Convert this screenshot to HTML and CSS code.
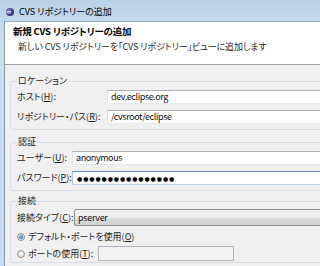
FILE: index.html
```html
<!DOCTYPE html>
<html lang="ja">
<head>
    <meta charset="UTF-8">
    <title>CVS リポジトリーの追加</title>
    <link rel="stylesheet" href="styles.css">
</head>
<body>
    <div class="window">
        <div class="titlebar">
            <svg class="app-icon" width="8" height="8" viewBox="0 0 8 8">
                <defs>
                    <radialGradient id="sphere" cx="0.35" cy="0.35" r="0.7">
                        <stop offset="0" stop-color="#8a7fd0"/>
                        <stop offset="1" stop-color="#2c2270"/>
                    </radialGradient>
                </defs>
                <circle cx="4" cy="4" r="4" fill="url(#sphere)"/>
                <rect x="0.5" y="3" width="4.5" height="0.7" fill="#fff"/>
                <rect x="0.5" y="4.6" width="4.5" height="0.7" fill="#fff"/>
            </svg>
            <span>CVS リポジトリーの追加</span>
        </div>
        <div class="client">
            <div class="banner">
                <div class="banner-title">新規 CVS リポジトリーの追加</div>
                <div class="banner-desc">新しい CVS リポジトリーを「CVS リポジトリー」ビューに追加します</div>
            </div>
            <div class="body">
                <fieldset class="group">
                    <legend>ロケーション</legend>
                    <div class="form form-location">
                        <label>ホスト(<u>H</u>):</label>
                        <div class="field">dev.eclipse.org</div>
                        <label>リポジトリー・パス(<u>R</u>):</label>
                        <div class="field">/cvsroot/eclipse</div>
                    </div>
                </fieldset>
                <fieldset class="group group-auth">
                    <legend>認証</legend>
                    <div class="form form-auth">
                        <label>ユーザー(<u>U</u>):</label>
                        <div class="field">anonymous</div>
                        <label>パスワード(<u>P</u>):</label>
                        <div class="field field-focus"><span class="dots">●●●●●●●●●●●●●●●●</span></div>
                    </div>
                </fieldset>
                <fieldset class="group group-conn">
                    <legend>接続</legend>
                    <div class="form form-conn">
                        <label>接続タイプ(<u>C</u>):</label>
                        <div class="combo">pserver</div>
                    </div>
                    <div class="radio-row">
                        <span class="radio checked"></span>
                        <span>デフォルト・ポートを使用(<u>O</u>)</span>
                    </div>
                    <div class="radio-row radio-port">
                        <span class="radio"></span>
                        <span class="port-label">ポートの使用(<u>T</u>):</span>
                        <div class="field field-disabled"></div>
                    </div>
                </fieldset>
            </div>
        </div>
    </div>
</body>
</html>
```

FILE: styles.css
```css
body {
    margin: 0;
    padding: 0;
    overflow: hidden;
    background-color: #f0f0f0;
    font-family: "Noto Sans CJK JP", sans-serif;
    font-size: 9px;
    font-feature-settings: "palt";
    color: #1a1a1a;
}
.window {
    width: 440px;
    height: 266px;
    display: flex;
    flex-direction: column;
    padding-left: 4px;
    background: linear-gradient(#b9d0e9, #cddef0 40px, #c6d9ee);
}
.titlebar {
    height: 21px;
    flex-shrink: 0;
    box-sizing: border-box;
    display: flex;
    align-items: center;
    gap: 5px;
    padding: 3px 0 0 2px;
    color: #000;
    line-height: 12px;
}
.app-icon {
    display: block;
}
.client {
    flex: 1;
    min-height: 0;
    overflow: hidden;
    background-color: #f0f0f0;
    border-left: 1px solid #8397ae;
    border-top: 1px solid #9aaec4;
}
.banner {
    height: 43px;
    box-sizing: border-box;
    padding: 3px 0 0 8px;
    background-color: #fff;
    border-bottom: 1px solid #a0a0a0;
    line-height: 12px;
}
.banner-title {
    font-size: 9.5px;
    font-weight: bold;
    letter-spacing: -0.2px;
    color: #000;
}
.banner-desc {
    margin: 4px 0 0 5px;
    color: #2a2a2a;
    letter-spacing: -0.1px;
}
.body {
    padding: 10px 0 0 5px;
}
.group {
    margin: 0 0 6px 0;
    padding: 3px 6px 5px 6px;
    border: 1px solid #d5dfe5;
    border-radius: 3px;
    min-inline-size: 0;
}
.group legend {
    padding: 0 1px;
    line-height: 12px;
}
.group-auth {
    margin-bottom: 4px;
    padding-bottom: 5px;
}
.group-conn {
    padding-top: 2px;
    padding-bottom: 1px;
}
.form {
    display: grid;
    row-gap: 6px;
    align-items: center;
    line-height: 12px;
}
.form-location {
    grid-template-columns: 90px 1fr;
}
.form-auth {
    grid-template-columns: 55px 1fr;
}
.form-conn {
    grid-template-columns: 57px 1fr;
}
.field {
    height: 14px;
    box-sizing: border-box;
    padding: 0 3px;
    background-color: #fff;
    border: 1px solid;
    border-color: #aeb0b6 #dfe3e8 #e3e9ef #dfe3e8;
    line-height: 12px;
    letter-spacing: -0.4px;
    color: #111;
}
.field-focus {
    border-color: #5d8fbf #a9c7e4 #b9d3ec #a9c7e4;
    padding-left: 4px;
}
.dots {
    font-family: "DejaVu Sans", sans-serif;
    font-size: 6px;
    letter-spacing: 0.9px;
    color: #000;
}
.combo {
    height: 17px;
    box-sizing: border-box;
    padding-left: 3px;
    border: 1px solid #8e8f8f;
    border-radius: 2px;
    background: linear-gradient(#f4f4f4 0%, #ececec 50%, #dedede 50%, #d0d0d0 100%);
    line-height: 15px;
    letter-spacing: -0.3px;
    color: #111;
}
.radio-row {
    display: flex;
    align-items: center;
    gap: 3px;
    height: 14px;
    margin-top: 4px;
    line-height: 12px;
}
.radio-port {
    height: 15px;
    margin-top: 2px;
}
.radio {
    width: 8px;
    height: 8px;
    box-sizing: border-box;
    border: 1px solid #8e9296;
    border-radius: 50%;
    background: radial-gradient(#f6f6f6, #dcdcdc);
    display: flex;
    align-items: center;
    justify-content: center;
}
.radio.checked::after {
    content: "";
    width: 4px;
    height: 4px;
    border-radius: 50%;
    background: radial-gradient(circle at 35% 35%, #7fb6e6, #1f5a92);
}
.port-label {
    width: 67px;
}
.field-disabled {
    width: 136px;
    height: 15px;
    background-color: #f2f2f2;
    border-color: #b5b5b5;
}
```
